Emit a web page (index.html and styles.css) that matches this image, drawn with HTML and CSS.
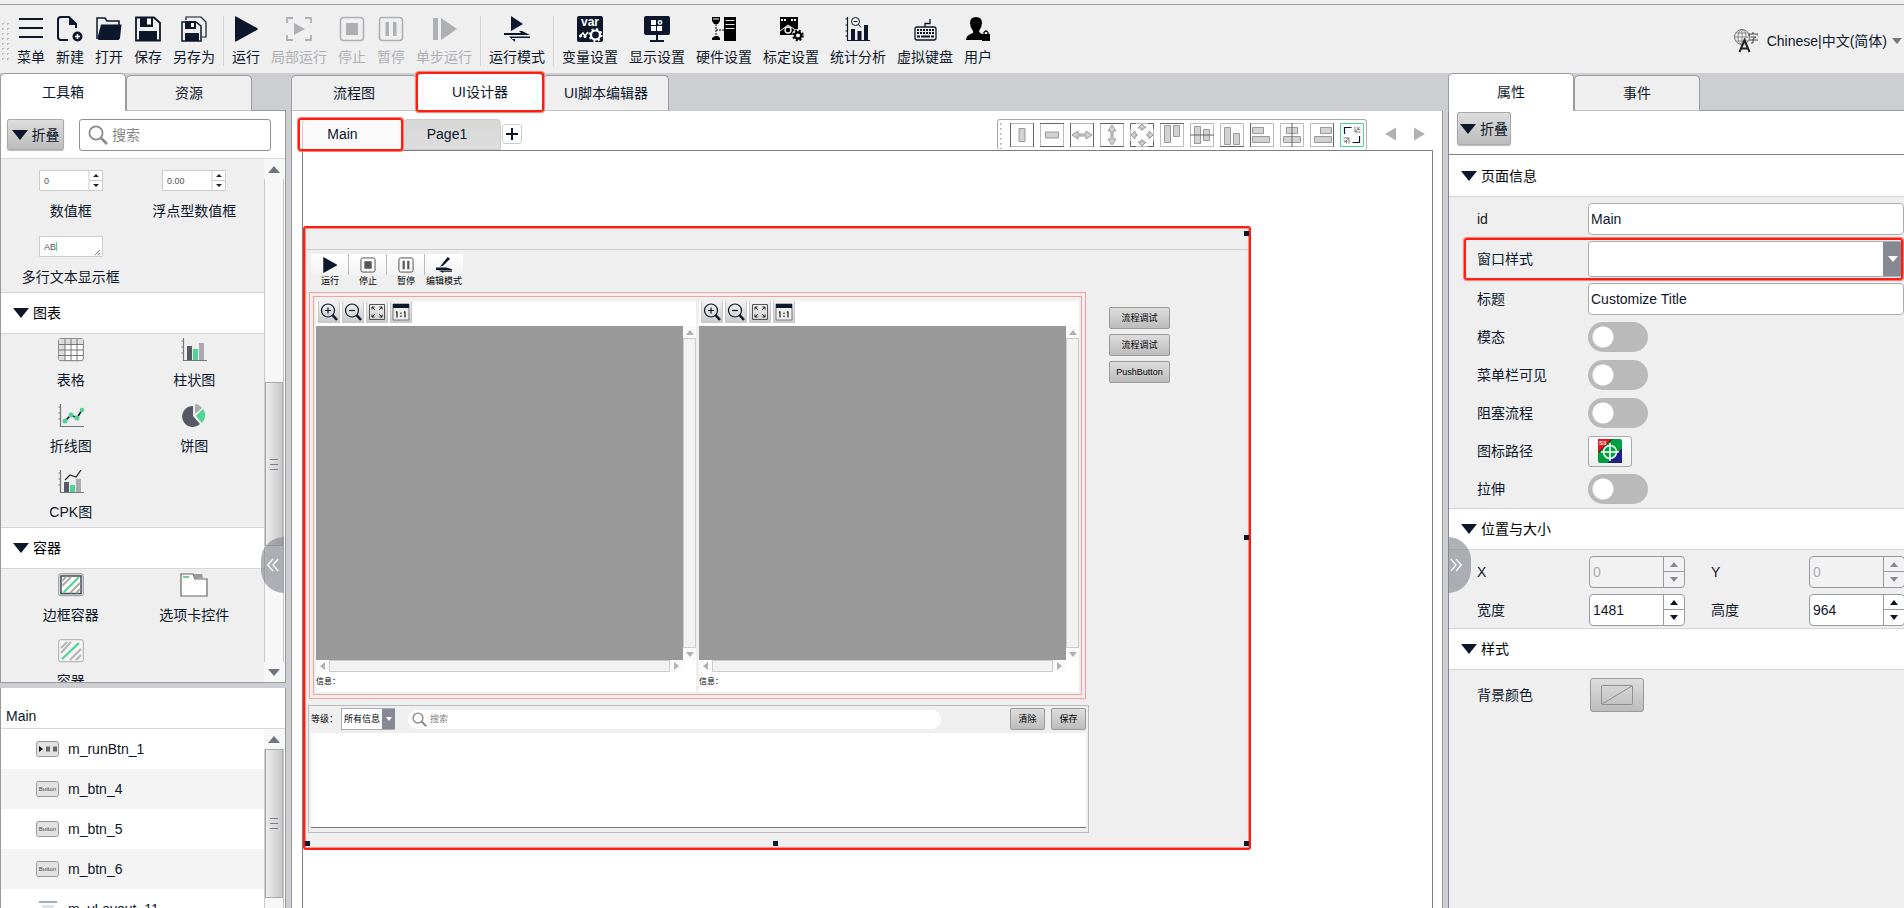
FILE: index.html
```html
<!DOCTYPE html>
<html lang="zh-CN">
<head>
<meta charset="utf-8">
<title>UI设计器</title>
<link rel="stylesheet" href="styles.css">
</head>
<body>
<svg class="defs" aria-hidden="true">
  <symbol id="down" viewBox="0 0 16 10"><path d="M0 0H16L8 10Z" fill="#0d172b"/></symbol>
  <symbol id="lens" viewBox="0 0 20 20"><circle cx="8" cy="8" r="6.6" fill="none" stroke="#8a8a8a" stroke-width="1.8"/><path d="M13 13L19 19" stroke="#8a8a8a" stroke-width="2.6"/></symbol>
  <symbol id="play" viewBox="0 0 26 26"><path d="M2 1Q2 0 3 .5L24 12Q25.500 13 24 14L3 25.500Q2 26 2 25Z"/></symbol>
  <symbol id="stop" viewBox="0 0 26 26"><rect x="1.500" y="1.500" width="23" height="23" rx="3" fill="none" stroke="currentColor" stroke-width="1.600"/><rect x="7" y="7" width="12" height="12" rx="1" fill="currentColor"/></symbol>
  <symbol id="pause" viewBox="0 0 26 26"><rect x="1.500" y="1.500" width="23" height="23" rx="3" fill="none" stroke="currentColor" stroke-width="1.600"/><path d="M7.500 6h3.500v14h-3.500zM15 6h3.500v14h-3.500z" fill="currentColor"/></symbol>
  <symbol id="zin" viewBox="0 0 18 18"><circle cx="8" cy="7.500" r="6.500" fill="none" stroke="#0d172b" stroke-width="1.200"/><path d="M5 7.500h6M8 4.500v6" stroke="#0d172b" stroke-width="1.200"/><path d="M12.500 12l4.500 5" stroke="#0d172b" stroke-width="2.600"/></symbol>
  <symbol id="zout" viewBox="0 0 18 18"><circle cx="8" cy="7.500" r="6.500" fill="none" stroke="#0d172b" stroke-width="1.200"/><path d="M5 7.500h6" stroke="#0d172b" stroke-width="1.200"/><path d="M12.500 12l4.500 5" stroke="#0d172b" stroke-width="2.600"/></symbol>
  <symbol id="fit" viewBox="0 0 18 18"><path d="M1.500 1.500h15v15h-15z" fill="none" stroke="#555"/><path d="M4 6.500V4h2.500M11.500 4H14v2.500M4 11.500V14h2.500M14 11.500V14h-2.500M4 4l3 3M14 4l-3 3M4 14l3-3M14 14l-3-3" fill="none" stroke="#222"/></symbol>
  <symbol id="one" viewBox="0 0 18 18"><path d="M1 1h16v16H1z" fill="#eee" stroke="#777"/><path d="M1 1h16v4H1z" fill="#0d172b"/><path d="M5 8.500v6M4 9.500l1-1M13 8.500v6M12 9.500l1-1M9 9.500v1.500M9 12.500v1.500" stroke="#222" stroke-width="1.200"/></symbol>
  <symbol id="axis" viewBox="0 0 26 24"><path d="M2.500 0v22.500H26M.5 3h2M.5 9h2M.5 15h2" fill="none" stroke="#73767d" stroke-width="1.200"/></symbol>
  <symbol id="btnicon" viewBox="0 0 23 16"><rect x=".5" y=".5" width="22" height="15" rx="2" fill="#e2e2e2" stroke="#999"/></symbol>
</svg>

<header class="topbar">
  <div class="grip"></div>
  <nav class="tools">
    <button class="tool"><svg viewBox="0 0 26 26"><path d="M1 3h24M1 12h24M1 21h24" stroke="#0d172b" stroke-width="2"/></svg>菜单</button>
    <button class="tool"><svg viewBox="0 0 26 26"><path d="M11 24H4Q1 24 1 21V4Q1 1 4 1H12L19 8V12" fill="none" stroke="#0d172b" stroke-width="2"/><path d="M12 1L20 9H12Z"/><circle cx="20.500" cy="20.500" r="5"/><path d="M18 20.500h5M20.500 18v5" stroke="#fff" stroke-width="1.500"/></svg>新建</button>
    <button class="tool"><svg viewBox="0 0 26 26"><path d="M1 23V2H9L11 5H23V9" fill="none" stroke="#0d172b" stroke-width="1.500"/><path d="M5 8.500H25.500L24 22Q23.500 24 22 24H3Q1 24 2 20Z"/></svg>打开</button>
    <button class="tool"><svg viewBox="0 0 26 26"><path d="M1 1.500H19L25 7V24.500H1Z" fill="none" stroke="#0d172b" stroke-width="1.800"/><path d="M5 1H18V11H5ZM4 15H22V25H4Z"/><path d="M12 2.500h4v6h-4z" fill="#fff"/></svg>保存</button>
    <button class="tool"><svg viewBox="0 0 26 26"><path d="M5 4V1H20L25 6V21H21" fill="none" stroke="#0d172b" stroke-width="1.200"/><path d="M1 6H15L20 10V25H1Z" fill="none" stroke="#0d172b" stroke-width="1.500"/><path d="M4 5H15V13H4ZM4 17H18V25H4Z"/><path d="M10 7h3v4h-3z" fill="#fff"/></svg>另存为</button>
    <i class="sep"></i>
    <button class="tool"><svg><use href="#play"/></svg>运行</button>
    <button class="tool off" disabled><svg viewBox="0 0 26 26"><path d="M1 7V2H7M19 2H25V7M25 19V24H19M7 24H1V19" fill="none" stroke="currentColor" stroke-width="1.800"/><path d="M8 7L19 13L8 19Z" fill="currentColor"/></svg>局部运行</button>
    <button class="tool off" disabled><svg><use href="#stop"/></svg>停止</button>
    <button class="tool off" disabled><svg><use href="#pause"/></svg>暂停</button>
    <button class="tool off" disabled><svg viewBox="0 0 26 26"><path d="M2 2h5v22H2zM10 2L26 13L10 24Z" fill="currentColor"/></svg>单步运行</button>
    <i class="sep"></i>
    <button class="tool"><svg viewBox="0 0 26 26"><path d="M7 0L19 8L7 15ZM0 17H17L15 15H18L26 19V19H0ZM26 20.500H5L11 26V23H8V22H26Z"/></svg>运行模式</button>
    <i class="sep"></i>
    <button class="tool"><svg viewBox="0 0 26 26"><rect width="26" height="26" rx="2"/><text x="13" y="10" font-size="12" font-weight="bold" fill="#fff" text-anchor="middle">var</text><circle cx="18.500" cy="19" r="4.500" fill="none" stroke="#fff" stroke-width="2.200"/><circle cx="18.500" cy="19" r="6" fill="none" stroke="#fff" stroke-width="2" stroke-dasharray="2 2.700"/><path d="M3 20l3-3 2 3 3-4" stroke="#fff" stroke-width="1.500" fill="none"/><circle cx="3.500" cy="20" r="1.500" fill="#fff"/><circle cx="8" cy="20.500" r="1.500" fill="#fff"/></svg>变量设置</button>
    <button class="tool"><svg viewBox="0 0 26 26"><rect y="0" width="26" height="19" rx="2"/><path d="M12 19h2v5h-2zM6 24h14v2H6z"/><path d="M7 4h5v5H7zM7 10h5v5H7zM13 10h5v5h-5z" fill="#fff"/><circle cx="16" cy="6.500" r="1.700" fill="none" stroke="#fff" stroke-width="1.500"/></svg>显示设置</button>
    <button class="tool"><svg viewBox="0 0 26 26"><path d="M1 1h8v4L7 8H3L1 5zM1 24v-2l3-2h3l2 2v2zM13 1h12v24H13z" fill="#000"/><path d="M5 8v12M5 14h8" stroke="#000" stroke-dasharray="2 1"/><path d="M14.500 4.500h9M14.500 8.500h9M14.500 12.500h9" stroke="#ddd"/><path d="M2 3h6" stroke="#fff"/></svg>硬件设置</button>
    <button class="tool"><svg viewBox="0 0 26 26"><path d="M2 1h18v18H2z" fill="#000"/><path d="M3 4h5M13 4h5" stroke="#fff" stroke-width="2" stroke-dasharray="2 1"/><path d="M2 15L10 9L19 15" stroke="#fff" fill="none"/><circle cx="10" cy="14" r="3" fill="#000" stroke="#fff" stroke-width="1.300"/><circle cx="20" cy="19.500" r="6.500" fill="#efefef"/><circle cx="20" cy="19.500" r="3.200" fill="none" stroke="#000" stroke-width="2.200"/><circle cx="20" cy="19.500" r="4.800" fill="none" stroke="#000" stroke-width="2" stroke-dasharray="2 1.800"/></svg>标定设置</button>
    <button class="tool"><svg viewBox="0 0 26 26"><path d="M2.500 1v23.500H25M.5 3h2M.5 9h2M.5 15h2M.5 20h2" fill="none" stroke="#0d172b" stroke-width="1.200"/><path d="M6 13h4v11H6zM12.500 15h4v9h-4zM19 9h4v15h-4z"/><circle cx="10.500" cy="5.500" r="4" fill="none" stroke="#0d172b"/><path d="M8.500 5.500h4M13.500 8.500l2.500 3" stroke="#0d172b"/></svg>统计分析</button>
    <button class="tool"><svg viewBox="0 0 26 26"><rect x="3" y="11" width="21" height="13" rx="2" fill="none" stroke="#0d172b" stroke-width="1.300"/><path d="M5 14h17M5 17h17" stroke="#0d172b" stroke-width="2" stroke-dasharray="2 1"/><path d="M5 20.500h3M9 20.500h9M19 20.500h3" stroke="#0d172b" stroke-width="2"/><path d="M13 11V7.500h5V3" fill="none" stroke="#0d172b" stroke-width="1.300"/></svg>虚拟键盘</button>
    <button class="tool"><svg viewBox="0 0 26 26"><path d="M5 7Q5 1 11 1Q17 1 17 7Q17 11 14 15Q14 17 17 18V24H1Q1 19 8 17V15Q5 11 5 7Z" fill="#000"/><path d="M17 18h8v7h-8z" fill="#000"/><path d="M19 18v-1.500q2-3 4 0V18" fill="none" stroke="#000" stroke-width="1.300"/></svg>用户</button>
  </nav>
  <button class="language">
    <svg viewBox="0 0 24 24"><circle cx="8" cy="8" r="7.500" fill="none" stroke="#777"/><path d="M8 .5v15M.5 8h15M2 4h12M2 12h12" stroke="#777" stroke-width=".8"/><ellipse cx="8" cy="8" rx="4" ry="7.500" fill="none" stroke="#777" stroke-width=".8"/><path d="M5.500 23L10.500 11L15.500 23M7.500 19.500h6" fill="none" stroke="#222" stroke-width="2"/><path d="M19 3v2M15 7V5h9v2M16.500 8h5.500l-3 2v4h-2M15 11h9" fill="none" stroke="#444"/></svg>
    <span>Chinese|中文(简体)</span><i class="caret"></i>
  </button>
</header>

<main class="workspace">
  <aside class="left">
    <div class="tabs"><button class="tab on">工具箱</button><button class="tab">资源</button><i class="tabfill"></i></div>
    <div class="toolbox">
      <div class="searchrow">
        <button class="fold"><svg><use href="#down"/></svg>折叠</button>
        <label class="search"><svg><use href="#lens"/></svg><input type="text" placeholder="搜索" aria-label="搜索"></label>
      </div>
      <div class="scroller">
        <div class="list">
          <div class="items first">
            <div class="item"><svg class="wide" viewBox="0 0 64 22"><path d="M.5 .5h63v20H.5z" fill="#fff" stroke="#ccc"/><path d="M50 0v21M50 10.500h14" stroke="#ccc"/><path d="M54 7l3-3 3 3zM54 14l3 3 3-3z" fill="#222"/><text x="5" y="14" font-size="9" fill="#555">0</text></svg>数值框</div>
            <div class="item"><svg class="wide" viewBox="0 0 64 22"><path d="M.5 .5h63v20H.5z" fill="#fff" stroke="#ccc"/><path d="M50 0v21M50 10.500h14" stroke="#ccc"/><path d="M54 7l3-3 3 3zM54 14l3 3 3-3z" fill="#222"/><text x="5" y="14" font-size="9" fill="#555">0.00</text></svg>浮点型数值框</div>
            <div class="item"><svg class="wide" viewBox="0 0 64 22"><path d="M.5 .5h63v20H.5z" fill="#fff" stroke="#ccc"/><text x="5" y="14" font-size="9" fill="#555">AB</text><path d="M17.500 6v9" stroke="#4fd492"/><path d="M56 19l5-5M59 19l2-2" stroke="#777"/></svg>多行文本显示框</div>
          </div>
          <h3><svg><use href="#down"/></svg>图表</h3>
          <div class="items">
            <div class="item"><svg viewBox="0 0 26 24"><rect x=".7" y=".7" width="24.600" height="22" rx="2" fill="#fff" stroke="#777"/><path d="M1 1h24v5H1zM1 6h6v16H1z" fill="#ddd"/><path d="M1 6.500h24M1 12h24M1 17.500h24M7 1v22M13 1v22M19 1v22" stroke="#777"/></svg>表格</div>
            <div class="item"><svg viewBox="0 0 26 24"><use href="#axis"/><path d="M6 8h5v14H6z" fill="#545963"/><path d="M12 11h5v11h-5z" fill="#4fd492"/><path d="M18 5h5v17h-5z" fill="#aaabb0"/></svg>柱状图</div>
            <div class="item"><svg viewBox="0 0 26 24"><use href="#axis"/><path d="M7 17l6-6 6 3 5-8" fill="none" stroke="#0d172b" stroke-width="1.600"/><g fill="#4fd492"><circle cx="7" cy="17" r="2.500"/><circle cx="13" cy="11" r="2.500"/><circle cx="19" cy="14" r="2.500"/><circle cx="24" cy="6" r="2.300"/></g></svg>折线图</div>
            <div class="item"><svg viewBox="0 0 26 24"><path d="M12 2A10.500 10.500 0 1 0 19 20L12 12Z" fill="#545963"/><path d="M14 0Q18 0 21 4L14 10Z" fill="#aaabb0"/><path d="M15 12L22 5Q27 12 21 19Z" fill="#4fd492"/></svg>饼图</div>
            <div class="item"><svg viewBox="0 0 26 24"><use href="#axis"/><path d="M6 12h5v10H6z" fill="#545963"/><path d="M12 15h5v7h-5z" fill="#4fd492"/><path d="M18 9h5v13h-5z" fill="#aaabb0"/><path d="M7 10l5-5 6 2 5-7" fill="none" stroke="#222" stroke-width="1.200"/></svg>CPK图</div>
          </div>
          <h3><svg><use href="#down"/></svg>容器</h3>
          <div class="items">
            <div class="item"><svg viewBox="0 0 26 24"><rect x=".7" y=".7" width="24.600" height="22" rx="2" fill="#ddd" stroke="#999"/><path d="M3 3h20v17.500H3z" fill="#fff" stroke="#454b57" stroke-width="1.500"/><path d="M4 13l9-9M12 20l10-10M18 20l4-4M4 8l4-4" stroke="#aaa" stroke-width="2"/><path d="M5 20L21 4" stroke="#4fd492" stroke-width="2.200"/></svg>边框容器</div>
            <div class="item"><svg class="folder" viewBox="0 0 28 24"><path d="M1 23V1h12l2 5h12v17z" fill="#fff" stroke="#666" stroke-width="1.200"/><path d="M13 1h9l1 4h-8z" fill="#999"/><path d="M3 4h6" stroke="#7c9" stroke-width="2"/></svg>选项卡控件</div>
            <div class="item"><svg viewBox="0 0 26 24"><rect x=".7" y=".7" width="24.600" height="22" rx="2" fill="#f5f5f5" stroke="#aaa"/><path d="M3 14L13 3M12 21l11-11M18 21l5-5M3 9l6-6" stroke="#b5b5b5" stroke-width="2"/><path d="M4 20L21 4" stroke="#4fd492" stroke-width="2.200"/></svg>容器</div>
          </div>
        </div>
        <div class="vbar"><i class="arrow up"></i><div class="track"><i class="thumb mid"></i></div><i class="arrow dn"></i></div>
        <button class="drawer dl" aria-label="收起"><svg viewBox="0 0 16 16"><path d="M8 1L2 8l6 7M14 1L8 8l6 7" fill="none" stroke="#fff" stroke-width="1.500"/></svg></button>
      </div>
    </div>
    <section class="tree">
      <h2>Main</h2>
      <div class="scroller">
        <ul>
          <li><svg viewBox="0 0 23 16"><use href="#btnicon"/><path d="M3 5l4 3-4 3z" fill="#111"/><path d="M10 5.500h4v5h-4zM17 5.500h4v5h-4z" fill="#666"/></svg>m_runBtn_1</li>
          <li><svg viewBox="0 0 23 16"><use href="#btnicon"/><text x="11.500" y="10" font-size="6" text-anchor="middle" fill="#444">Button</text></svg>m_btn_4</li>
          <li><svg viewBox="0 0 23 16"><use href="#btnicon"/><text x="11.500" y="10" font-size="6" text-anchor="middle" fill="#444">Button</text></svg>m_btn_5</li>
          <li><svg viewBox="0 0 23 16"><use href="#btnicon"/><text x="11.500" y="10" font-size="6" text-anchor="middle" fill="#444">Button</text></svg>m_btn_6</li>
          <li><svg viewBox="0 0 23 16"><path d="M3 1h18M3 15h18" stroke="#8a919c" stroke-width="1.500"/><path d="M6 4h12v8H6z" fill="#dfe2e6"/></svg>m_vLayout_11</li>
        </ul>
        <div class="vbar"><i class="arrow up"></i><div class="track"><i class="thumb top"></i></div></div>
      </div>
    </section>
  </aside>

  <section class="center">
    <div class="tabs"><button class="tab">流程图</button><button class="tab on marked">UI设计器</button><button class="tab">UI脚本编辑器</button></div>
    <div class="designer">
      <div class="pagebar">
        <button class="page on marked">Main</button><button class="page">Page1</button>
        <button class="add" aria-label="新增页面"><svg viewBox="0 0 12 12"><path d="M0 6h12M6 0v12" stroke="#0d172b" stroke-width="2"/></svg></button>
        <div class="align">
          <i class="dots"></i>
          <svg viewBox="0 0 24 24"><path class="f" d="M.5 .5h23v23H.5z"/><path class="k" d="M.5 0v24M23.500 0v24"/><path class="s" d="M9 5.500h6v13H9z"/></svg>
          <svg viewBox="0 0 24 24"><path class="f" d="M.5 .5h23v23H.5z"/><path class="k" d="M0 .5h24M0 23.500h24"/><path class="s" d="M5.500 9h13v6h-13z"/></svg>
          <svg viewBox="0 0 24 24"><path class="f" d="M.5 .5h23v23H.5z"/><path class="k" d="M.5 0v24M23.500 0v24"/><path class="s" d="M2 12l6-4v3h8V8l6 4-6 4v-3H8v3z"/></svg>
          <svg viewBox="0 0 24 24"><path class="f" d="M.5 .5h23v23H.5z"/><path class="k" d="M0 .5h24M0 23.500h24"/><path class="s" d="M12 2l4 6h-3v8h3l-4 6-4-6h3V8H8z"/></svg>
          <svg viewBox="0 0 24 24"><path class="f" d="M.5 .5h23v23H.5z"/><path class="k" d="M.5 6V.5H6M18 .5h5.500V6M23.500 18v5.500H18M6 23.500H.5V18"/><path class="s" d="M12 1l4 4h-3v2h-2V5H8zM12 23l4-4h-3v-2h-2v2H8zM1 12l4-4v3h2v2H5v3zM23 12l-4-4v3h-2v2h2v3z"/></svg>
          <svg viewBox="0 0 24 24"><path class="f" d="M.5 .5h23v23H.5z"/><path class="k" d="M0 .5h24"/><path class="s" d="M4.500 2.500h6v17h-6zM13.500 2.500h6v11h-6z"/></svg>
          <svg viewBox="0 0 24 24"><path class="f" d="M.5 .5h23v23H.5z"/><path class="s" d="M4.500 3.500h6v17h-6zM13.500 6.500h6v11h-6z"/><path class="k" d="M0 12h24"/></svg>
          <svg viewBox="0 0 24 24"><path class="f" d="M.5 .5h23v23H.5z"/><path class="k" d="M0 23.500h24"/><path class="s" d="M4.500 4.500h6v17h-6zM13.500 10.500h6v11h-6z"/></svg>
          <svg viewBox="0 0 24 24"><path class="f" d="M.5 .5h23v23H.5z"/><path class="k" d="M.5 0v24"/><path class="s" d="M2.500 4.500h11v6h-11zM2.500 13.500h17v6h-17z"/></svg>
          <svg viewBox="0 0 24 24"><path class="f" d="M.5 .5h23v23H.5z"/><path class="s" d="M6.500 4.500h11v6h-11zM3.500 13.500h17v6h-17z"/><path class="k" d="M12 0v24"/></svg>
          <svg viewBox="0 0 24 24"><path class="f" d="M.5 .5h23v23H.5z"/><path class="k" d="M23.500 0v24"/><path class="s" d="M10.500 4.500h11v6h-11zM4.500 13.500h17v6h-17z"/></svg>
          <svg viewBox="0 0 24 24"><path d="M.5 .5h23v23H.5z" fill="#fff" stroke="#4fd492"/><path d="M4.500 11V4.500H11.500M19.500 13v6.500H12.500" fill="none" stroke="#0d172b" stroke-width="1.200"/><path d="M15 3.500v5.500h5.500M15.500 8.500l4-4M18 3.500v3h2.500M3.500 15h5.500v5.500M8.500 15.500l-4 4M3.500 18h3v2.500" fill="none" stroke="#777"/></svg>
        </div>
        <button class="nav" aria-label="上一页"><svg viewBox="0 0 12 14"><path d="M12 0v14L0 7z" fill="#b1b1b1"/></svg></button>
        <button class="nav" aria-label="下一页"><svg viewBox="0 0 12 14"><path d="M0 0v14l12-7z" fill="#b1b1b1"/></svg></button>
      </div>
      <div class="canvas">
        <div class="form">
          <i class="h tr"></i><i class="h mr"></i><i class="h br"></i><i class="h bm"></i><i class="h bl"></i>
          <div class="formtitle"></div>
          <div class="formbody">
            <div class="formmain">
              <div class="runbar">
                <button><span><svg viewBox="0 0 26 26"><use href="#play"/></svg></span>运行</button>
                <button class="g"><span><svg viewBox="0 0 26 26"><use href="#stop"/></svg></span>停止</button>
                <button class="g"><span><svg viewBox="0 0 26 26"><use href="#pause"/></svg></span>暂停</button>
                <button><span><svg viewBox="0 0 26 26"><path d="M8 14L19 0L23 3L12 14L6 16ZM0 17H17L26 20V21H0ZM26 22H4L12 26V24H26Z"/></svg></span>编辑模式</button>
              </div>
              <div class="outer"><div class="inner">
                <div class="view">
                  <div class="viewtools"><button aria-label="放大"><svg><use href="#zin"/></svg></button><button aria-label="缩小"><svg><use href="#zout"/></svg></button><button aria-label="适应"><svg><use href="#fit"/></svg></button><button aria-label="原始大小"><svg><use href="#one"/></svg></button></div>
                  <div class="image"></div>
                  <div class="sv"><i class="arrow up"></i><b></b><i class="arrow dn"></i></div>
                  <div class="sh"><i class="arrow lt"></i><b></b><i class="arrow rt"></i></div>
                  <div class="info">信息：</div>
                </div>
                <div class="view">
                  <div class="viewtools"><button aria-label="放大"><svg><use href="#zin"/></svg></button><button aria-label="缩小"><svg><use href="#zout"/></svg></button><button aria-label="适应"><svg><use href="#fit"/></svg></button><button aria-label="原始大小"><svg><use href="#one"/></svg></button></div>
                  <div class="image"></div>
                  <div class="sv"><i class="arrow up"></i><b></b><i class="arrow dn"></i></div>
                  <div class="sh"><i class="arrow lt"></i><b></b><i class="arrow rt"></i></div>
                  <div class="info">信息：</div>
                </div>
              </div></div>
              <div class="log">
                <div class="logbar">
                  <label for="level">等级：</label>
                  <div class="combo small"><select id="level"><option>所有信息</option></select><i></i></div>
                  <label class="logsearch"><svg><use href="#lens"/></svg><input type="text" placeholder="搜索" aria-label="搜索信息"></label>
                  <button class="mini">清除</button><button class="mini">保存</button>
                </div>
                <div class="logtext"></div>
              </div>
            </div>
            <div class="side"><button class="mini">流程调试</button><button class="mini">流程调试</button><button class="mini">PushButton</button></div>
          </div>
        </div>
      </div>
    </div>
  </section>

  <aside class="right">
    <div class="tabs"><button class="tab on">属性</button><button class="tab">事件</button><i class="tabfill"></i></div>
    <div class="props">
      <div class="foldrow"><button class="fold"><svg><use href="#down"/></svg>折叠</button></div>
      <div class="sections">
        <h3><svg><use href="#down"/></svg>页面信息</h3>
        <div class="rows">
          <div class="row"><label for="pid">id</label><input class="field" id="pid" type="text" value="Main"></div>
          <div class="row tall"><label for="pstyle">窗口样式</label><div class="combo"><select id="pstyle"><option></option></select><i></i></div></div>
          <div class="row"><label for="ptitle">标题</label><input class="field" id="ptitle" type="text" value="Customize Title"></div>
          <div class="row sw"><label for="s1">模态</label><input class="switch" id="s1" type="checkbox"></div>
          <div class="row sw"><label for="s2">菜单栏可见</label><input class="switch" id="s2" type="checkbox"></div>
          <div class="row sw"><label for="s3">阻塞流程</label><input class="switch" id="s3" type="checkbox"></div>
          <div class="row sw"><label for="picon">图标路径</label><button class="iconbtn" id="picon"><svg viewBox="0 0 24 24"><rect width="24" height="24" rx="2" fill="#00a040"/><path d="M0 0H14L0 14Z" fill="#e8141c"/><path d="M24 10V24H10Z" fill="#1d2088"/><path d="M14 0L0 14M24 10L10 24" stroke="#111" stroke-width=".8"/><circle cx="12" cy="13" r="6.500" fill="none" stroke="#fff" stroke-width="1.500"/><path d="M3 13h18M12 4v18" stroke="#fff" stroke-width="1.500"/><text x="1" y="6" font-size="6" font-weight="bold" fill="#fff">S3</text></svg></button></div>
          <div class="row sw"><label for="s4">拉伸</label><input class="switch" id="s4" type="checkbox"></div>
        </div>
        <h3><svg><use href="#down"/></svg>位置与大小</h3>
        <div class="geometry">
          <label for="gx">X</label><div class="spin dis"><input id="gx" type="text" value="0" disabled><button disabled aria-label="X 增加"><i class="arrow up"></i></button><button disabled aria-label="X 减少"><i class="arrow dn"></i></button></div>
          <label for="gy">Y</label><div class="spin dis"><input id="gy" type="text" value="0" disabled><button disabled aria-label="Y 增加"><i class="arrow up"></i></button><button disabled aria-label="Y 减少"><i class="arrow dn"></i></button></div>
          <label for="gw">宽度</label><div class="spin"><input id="gw" type="text" value="1481"><button aria-label="宽度增加"><i class="arrow up"></i></button><button aria-label="宽度减少"><i class="arrow dn"></i></button></div>
          <label for="gh">高度</label><div class="spin"><input id="gh" type="text" value="964"><button aria-label="高度增加"><i class="arrow up"></i></button><button aria-label="高度减少"><i class="arrow dn"></i></button></div>
        </div>
        <h3><svg><use href="#down"/></svg>样式</h3>
        <div class="rows style"><div class="row"><label for="bg">背景颜色</label><button class="color" id="bg"><svg viewBox="0 0 32 20"><rect x=".5" y=".5" width="31" height="19" rx="1" fill="none" stroke="#8f8f8f"/><path d="M1 19L31 1" stroke="#8f8f8f"/></svg></button></div></div>
      </div>
    </div>
    <button class="drawer dr" aria-label="展开"><svg viewBox="0 0 16 16"><path d="M2 1l6 7-6 7M8 1l6 7-6 7" fill="none" stroke="#fff" stroke-width="1.500"/></svg></button>
  </aside>
</main>
</body>
</html>
```

FILE: styles.css
```css
*{box-sizing:border-box}
body{margin:0;height:100vh;display:flex;flex-direction:column;overflow:hidden;background:#cdced2;color:#0d172b;font:14px/20px "Liberation Sans","Noto Sans CJK SC",sans-serif}
button,input,select{font:inherit;color:inherit;margin:0;padding:0;border:0;background:none;border-radius:0;outline:0}
svg{display:block;flex:none;fill:#0d172b}
h2,h3,ul{margin:0;padding:0;font-weight:normal;font-size:14px;list-style:none}
i{font-style:normal}
.defs{position:absolute;width:0;height:0}

.topbar{flex:none;margin-top:4px;height:69px;border-top:1px solid #999;box-shadow:0 -4px #efefef;background:#efefef;display:flex;align-items:flex-start}
.grip{width:10px;height:40px;margin:16px 7px 0 0;background:radial-gradient(circle,#bbb 1px,transparent 1px) 0 0/5px 5px}
.tools{display:flex;gap:11px;padding-top:11px;flex:1}
.tool{display:flex;flex-direction:column;align-items:center;gap:5px;white-space:nowrap;flex:none}
.tool svg{width:26px;height:26px}
.off{color:#aeafb3}
.off svg{fill:#aeafb3}
.sep{width:1px;height:50px;background:#d2d2d2;margin:0 -3px}
.language{display:flex;align-items:center;height:24px;margin-top:24px}
.language svg{width:24px;height:24px;margin-right:9px}
.caret{border:5px solid transparent;border-top:6px solid #73767d;border-bottom:0;margin:0 2px 0 5px}

.workspace{flex:1;min-height:0;display:flex;gap:5px}
.left{width:286px;flex:none;display:flex;flex-direction:column;min-height:0}
.center{flex:1;min-width:0;display:flex;flex-direction:column}
.right{width:456px;flex:none;display:flex;flex-direction:column;position:relative}
.tabs{height:38px;flex:none;display:flex;align-items:flex-end}
.tab{width:126px;height:36px;background:#efefef;border:1px solid #999ba1;border-bottom-color:#bfc2c8;border-radius:5px 5px 0 0}
.tab.on{height:38px;background:#fff;border-bottom-color:#fff}
.tabfill{flex:1;border-bottom:1px solid #999ba1}
.marked{position:relative}
.marked::after{content:"";position:absolute;inset:-2px;border:2px solid #ff1d10;border-radius:3px;box-shadow:0 0 0 1px #ff7f77}

.toolbox{flex:13 1 0;min-height:0;display:flex;flex-direction:column;background:#fff;border:solid #999;border-width:0 1px 1px}
.searchrow{height:48px;flex:none;display:flex;align-items:center;padding:0 14px 0 6px;gap:15px;border-bottom:1px solid #d8d8d8}
.fold{display:flex;align-items:center;justify-content:center;gap:4px;width:57px;height:31px;border:1px solid #aaa;border-radius:2px;background:linear-gradient(#ddd,#bcbcbc);flex:none;box-shadow:0 1px 1px #bbb}
.fold svg,h3 svg{width:16px;height:10px}
.search{flex:1;height:32px;display:flex;align-items:center;gap:4px;border:1px solid #8f9197;border-radius:3px;padding-left:8px}
.search svg{width:20px;height:20px}
input::placeholder{color:#858585;opacity:1}
.search input{flex:1;width:50px}
.scroller{flex:1;min-height:0;display:flex;position:relative}
.list{flex:1;min-width:0;overflow:hidden;background:#efefef}
h3{height:41px;display:flex;align-items:center;gap:4px;padding-left:12px;background:#fff;border-bottom:1px solid #d5d6da;color:#000}
.items{display:grid;grid-template-columns:1fr 1fr;row-gap:14px;padding:4px 8px 5px;border-bottom:1px solid #d5d6da}
.first{padding-top:10px}
.item{display:flex;flex-direction:column;align-items:center;gap:8px}
.item svg{width:26px;height:24px}
.item .wide{width:64px}
.item .folder{width:28px}
.vbar{width:21px;flex:none;display:flex;flex-direction:column;background:#f7f7f7;padding-right:1px}
.arrow{display:flex;align-items:center;justify-content:center;height:20px;flex:none}
.arrow::before{content:"";border:6px solid transparent}
.up::before{border-bottom:7px solid #6f737d;border-top:0}
.dn::before{border-top:7px solid #6f737d;border-bottom:0}
.track{flex:1;min-height:0;border:solid #c8c9cc;border-width:0 1px;background:#f7f7f7;display:flex;flex-direction:column}
.thumb{display:flex;align-items:center;justify-content:center;flex:none;border:1px solid #aaa;background:linear-gradient(90deg,#ececec,#c9c9c9)}
.thumb::before{content:"";width:8px;height:11px;background:repeating-linear-gradient(#7c7f87 0 1px,transparent 1px 5px)}
.mid{height:34%;margin-top:203px}
.top{height:149px}
.drawer{position:absolute;width:23px;height:56px;background:rgba(135,137,146,.65);display:flex;align-items:center;justify-content:center}
.drawer svg{width:14px;height:16px}
.dl{right:1px;top:378px;border-radius:28px 0 0 28px}
.drawer.dr{left:0;top:464px;border-radius:0 28px 28px 0;justify-content:flex-start;padding-left:1px}
.tree{flex:5 1 0;min-height:0;margin-top:5px;background:#fff;border:solid #999;border-width:0 1px;display:flex;flex-direction:column}
.tree h2{flex:none;padding:18px 5px 2px;height:41px;border-bottom:1px solid #d8d8d8}
.tree ul{flex:1;overflow:hidden}
.tree li{height:40px;display:flex;align-items:center;gap:9px;padding-left:35px}
.tree li:nth-child(even){background:#f4f4f4}
.tree li svg{width:23px;height:16px}

.designer{flex:1;min-height:0;background:#fff;border:solid #999;border-width:0 1px;padding:8px 9px 0 10px;display:flex;flex-direction:column}
.pagebar{display:flex;align-items:flex-end;height:31px;flex:none}
.page{width:98px;height:31px;padding:0 10px 2px 0;background:linear-gradient(#d8d8d8,#ddd);border:1px solid #ccc;border-radius:4px 4px 0 0}
.page.on{width:101px;background:#fafafa;padding-right:20px}
.page.marked::after{left:-5px;right:-1px}
.add{width:20px;height:20px;border:1px solid #ccc;border-radius:3px;display:grid;place-items:center;margin:0 auto 6px 1px}
.add svg{width:12px;height:12px}
.align{height:31px;display:flex;align-items:center;gap:6px;border:1px solid #aaa;border-bottom:0;border-radius:3px;padding-right:2px}
.align svg{width:24px;height:24px}
.dots{width:6px;height:28px;background:radial-gradient(circle,#bbb 1px,transparent 1px) 0 0/5px 5px}
.f{fill:#fff;stroke:#bbb}
.k{fill:none;stroke:#666}
.s{fill:#d2d2d2;stroke:#999}
.nav{margin:0 0 9px 18px}
.nav svg{width:11px;height:14px}
.nav:last-child{margin-right:8px}
.canvas{flex:1;min-height:0;border:solid #7d8087;border-width:1px 1px 0;padding-top:75px}
.form{position:relative;width:84%;height:624px;background:#efefef;border:2px solid #ff1d10;box-shadow:inset 0 0 0 1px #ff8f88;border-radius:3px;display:flex;flex-direction:column}
.formtitle{height:22px;border-bottom:1px solid #ccc;margin:0 1px}
.h{position:absolute;width:5px;height:5px;background:#0d172b}
.tr{right:0;top:3px}.mr{right:0;top:50%;margin-top:-3px}.br{right:0;bottom:2px}.bm{left:50%;bottom:2px;margin-left:-4px}.bl{left:0;bottom:2px}
.formbody{flex:1;min-height:0;display:flex;padding:4px 0 15px 3px;font-size:8px;line-height:12px;color:#000}
.formmain{width:781px;display:flex;flex-direction:column}
.runbar{display:flex;padding-left:3px;height:38px}
.runbar button{width:38px;display:flex;flex-direction:column;align-items:center;white-space:nowrap;font-size:9px}
.runbar span{width:100%;height:21px;display:grid;place-items:center;border-right:1px solid #bbb;background:linear-gradient(#fff,#f2f2f2)}
.runbar button:last-child span{border:0}
.runbar svg{width:16px;height:16px}
.g svg{color:#555}
.outer{margin:0 3px 0 1px;height:407px;border:1px solid #f5a0a0;padding:3px}
.inner{height:100%;border:1px solid #f5a0a0;padding:4px 2px 2px;display:flex;gap:3px}
.view{flex:1;display:grid;grid-template:25px 1fr 12px 20px/1fr 13px;background:#fff}
.viewtools{grid-column:1/3;display:flex;gap:2px;padding-left:2px}
.viewtools button{width:22px;height:22px;border:1px solid #c8c8c8;border-top-color:#eee;background:linear-gradient(#f2f2f2,#ccc);display:grid;place-items:center}
.viewtools svg{width:18px;height:18px}
.image{background:#999}
.sv{display:flex;flex-direction:column;background:#fafafa}
.sh{grid-column:1;display:flex;background:#fafafa}
.sv b{flex:1;border:1px solid #ccc;background:#f2f2f2}
.sh b{flex:1;border:1px solid #ccc;background:#f2f2f2}
.form .arrow{width:13px;height:12px}
.form .arrow::before{border:4px solid transparent}
.form .up::before{border-bottom:5px solid #b1b1b5;border-top:0}
.form .dn::before{border-top:5px solid #b1b1b5;border-bottom:0}
.form .lt::before{border-right:5px solid #b1b1b5;border-left:0}
.form .rt::before{border-left:5px solid #b1b1b5;border-right:0}
.info{grid-column:1/3;padding-top:4px}
.log{margin-top:6px;flex:1;min-height:0;border:1px solid #bbb;padding:2px;display:flex;flex-direction:column}
.logbar{display:flex;align-items:center;height:25px;padding-bottom:3px;font-size:9px}
.logbar>label:first-child{width:30px;white-space:nowrap}
.combo{flex:1;display:flex;position:relative;height:36px}
.combo select{width:100%;appearance:none;background:#fff;border:1px solid #aaacb2;border-radius:3px;padding-left:7px}
.combo i{position:absolute;right:0;top:1px;bottom:1px;width:19px;background:#868993;display:grid;place-items:center;pointer-events:none}
.combo i::before{content:"";border:5px solid transparent;border-top:6px solid #fff;border-bottom:0}
.combo.small{flex:none;width:54px;height:22px}
.small select{border-radius:0;padding-left:2px}
.combo.small i{width:13px}
.small i::before{border-width:4px 3px 0}
.logsearch{flex:1;margin:0 69px 0 13px;height:19px;border-radius:10px;background:#fff;display:flex;align-items:center;gap:3px;padding-left:4px}
.logsearch svg{width:15px;height:15px}
.logsearch input{flex:1}
.mini{height:22px;border:1px solid #999;border-radius:2px;background:linear-gradient(#ddd,#bcbcbc);font-size:9px;line-height:12px}
.logbar .mini{width:35px}
.logbar .mini+.mini{margin-left:6px}
.logtext{flex:1;background:#fff;border-bottom:1px solid #777;margin:0 0 2px}
.side{display:flex;flex-direction:column;gap:5px;padding:53px 0 0 20px}
.side .mini{width:61px}

.props{flex:1;min-height:0;background:#efefef;border-left:1px solid #86888f;display:flex;flex-direction:column}
.foldrow{height:44px;flex:none;background:#fff;border-bottom:1px solid #7d8087;padding:1px 8px}
.foldrow .fold{width:54px;height:33px}
.sections{flex:1}
.sections h3:first-child{height:42px}
.rows{padding:6px 0 3px;border-bottom:1px solid #d5d6da;display:flex;flex-direction:column;gap:6px}
.row{display:flex;align-items:center;padding-left:28px}
.row>label{width:111px;flex:none}
.row .combo{margin-right:2px}
.tall{position:relative}
.tall::after{content:"";position:absolute;inset:-3px 1px -3px 15px;border:2px solid #ff1d10;border-radius:3px;box-shadow:0 0 0 1px #ff7f77;pointer-events:none}
.field{flex:1;min-width:0;height:32px;background:#fff;border:1px solid #aaacb2;border-radius:4px;padding:0 2px}
.sw{height:32px}
.switch{appearance:none;width:60px;height:30px;border-radius:15px;background:radial-gradient(circle at 15px 15px,#fff 10px,#bababa 11px)}
.iconbtn{width:44px;height:31px;border:1px solid #aaa;border-radius:3px;background:linear-gradient(#fff,#eee);display:grid;place-items:center}
.iconbtn svg{width:24px;height:24px}
.geometry{display:grid;grid-template-columns:112px 96px 124px 96px;row-gap:6px;align-items:center;padding:6px 0 2px 28px;border-bottom:1px solid #d5d6da}
.geometry label:nth-of-type(even){padding-left:26px}
.spin{height:32px;display:grid;grid-template:1fr 1fr/1fr 21px;border:1px solid #999ba1;border-radius:4px;background:#fff}
.spin input{grid-row:1/3;min-width:0;padding-left:3px}
.spin button{border-left:1px solid #999ba1;display:grid;place-items:center}
.spin button:first-of-type{border-bottom:1px solid #999ba1}
.spin .arrow{height:6px}
.spin .up::before{border:4px solid transparent;border-bottom:5px solid #0d172b;border-top:0}
.spin .dn::before{border:4px solid transparent;border-top:5px solid #0d172b;border-bottom:0}
.spin.dis{background:#f2f2f2;color:#aaacb2}
.dis .up::before{border-bottom-color:#868993}
.dis .dn::before{border-top-color:#868993}
.rows.style{border:0;padding-top:8px}
.color{width:54px;height:34px;margin-left:2px;border:1px solid #999;border-radius:3px;background:linear-gradient(#ddd,#bcbcbc);display:grid;place-items:center}
.color svg{width:32px;height:20px}
```
